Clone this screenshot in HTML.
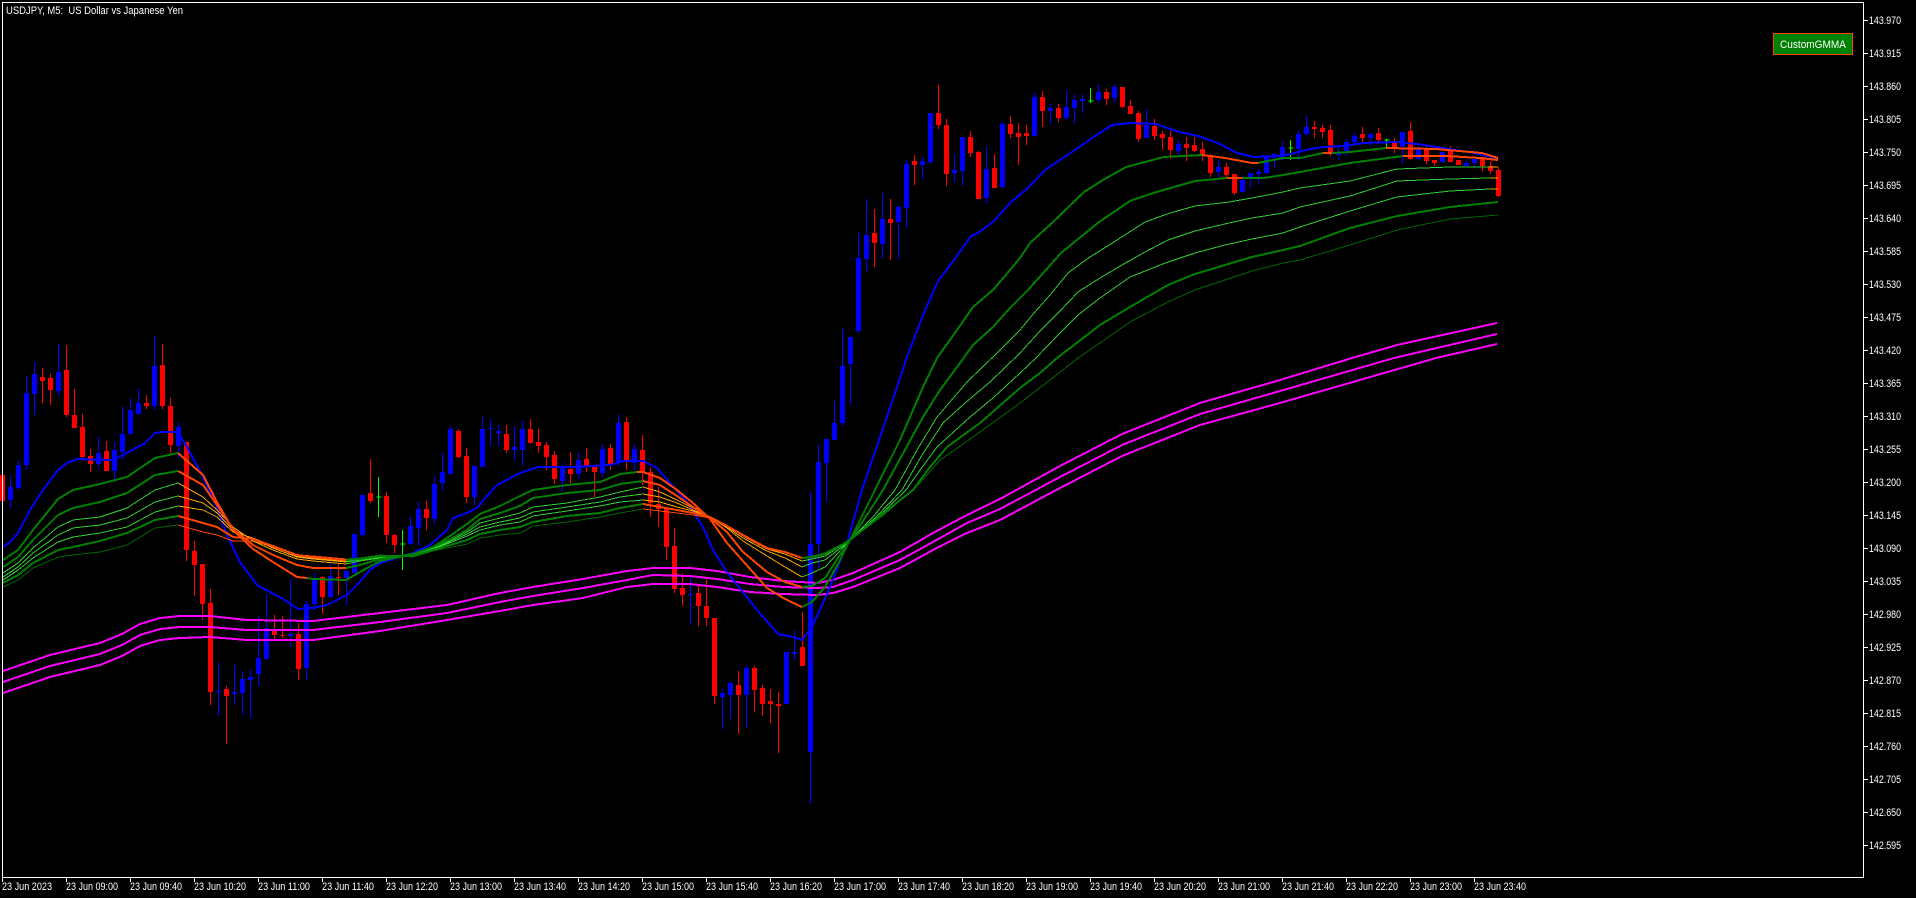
<!DOCTYPE html>
<html><head><meta charset="utf-8"><title>USDJPY, M5</title>
<style>
html,body{margin:0;padding:0;background:#000;width:1916px;height:898px;overflow:hidden}
svg{display:block}
text{font-family:"Liberation Sans",sans-serif;font-size:11px;fill:#fff;white-space:pre}
.l{fill:none;shape-rendering:crispEdges}
.t2{stroke-width:2}.t1{stroke-width:1}
.g{stroke:#008000}.lg{stroke:#32cd32}.dg{stroke:#006400}.o{stroke:#ff4500}.a{stroke:#ffa500}
</style></head><body>
<svg width="1916" height="898" viewBox="0 0 1916 898" xmlns="http://www.w3.org/2000/svg">
<rect width="1916" height="898" fill="#000"/>
<g transform="translate(.5,0)" fill="none" shape-rendering="crispEdges">
<path stroke="#00f" d="M10 475V509M18 460V490M26 376V470M34 362V415M58 344V397M98 437V469M114 442V481M122 406V460M130 398V435M138 389V415M154 336V410M178 422V458M218 662V716M234 665V705M242 671V715M250 669V718M258 616V686M266 594V659M290 579V647M306 601V680M314 573V610M330 563V597M346 571V605M354 534V573M362 495V537M410 516V545M418 502V546M434 475V524M442 453V491M450 426V475M474 466V505M482 417V467M490 419V446M498 425V446M514 426V461M522 421V466M562 463V491M578 452V479M602 444V477M618 414V466M634 444V470M690 577V625M722 689V729M730 682V719M746 665V728M786 652V704M794 630V661M810 491V804M818 444V568M826 439V502M834 401V440M842 329V426M850 337V405M858 233V333M866 199V271M882 193V258M898 205V259M906 160V228M922 157V179M930 113V164M954 154V182M962 137V186M986 146V203M1002 122V188M1034 93V137M1050 104V125M1066 90V120M1074 94V124M1082 94V113M1098 84V103M1114 84V103M1146 109V138M1178 140V157M1218 160V178M1242 175V193M1250 173V188M1258 169V185M1266 155V174M1274 154V168M1282 141V160M1298 130V160M1306 115V137M1338 147V160M1346 139V156M1354 133V146M1370 133V146M1402 132V164M1418 145V160M1442 152V163M1466 159V166M1474 156V168"/>
<path stroke="#00f" stroke-width="5" d="M10 487V500M18 465V488M26 393V465M34 374V394M58 372V391M98 453V464M114 450V471M122 434V452M130 410V434M138 403V414M154 366V406M178 427V446M218 691V692M234 692V694M242 679V693M250 677V680M258 658V674M266 628V659M290 634V636M306 604V668M314 579V604M330 576V597M346 571V578M354 534V573M362 495V535M410 526V544M418 509V528M434 484V519M442 472V483M450 429V474M474 466V497M482 429V467M490 428V429M498 431V433M514 447V450M522 429V450M562 467V481M578 460V474M602 449V473M618 423V463M634 449V463M690 594V595M722 693V697M730 683V695M746 668V695M786 652V704M794 652V654M810 544V752M818 462V544M826 439V463M834 423V440M842 366V423M850 337V364M858 258V331M866 235V259M882 219V244M898 207V222M906 164V208M922 161V165M930 113V162M954 170V173M962 137V171M986 169V198M1002 124V187M1034 97V136M1050 108V111M1066 107V118M1074 100V108M1082 99V101M1098 92V100M1114 87V98M1146 125V138M1178 144V151M1218 167V172M1242 180V192M1250 173V178M1258 172V174M1266 157V173M1274 154V157M1282 147V156M1298 134V149M1306 127V134M1338 152V155M1346 142V151M1354 136V142M1370 134V138M1402 132V147M1418 149V159M1442 152V162M1466 163V166M1474 159V163"/>
<path stroke="#f00" d="M42 368V403M50 374V405M66 345V417M74 389V428M82 414V458M90 449V472M106 441V471M146 395V409M162 344V409M170 398V455M186 442V561M194 541V596M202 564V620M210 589V705M226 686V744M274 615V639M282 616V638M298 623V680M322 576V614M338 563V595M370 459V503M386 492V543M394 534V553M426 501V530M458 429V458M466 448V503M506 425V453M530 419V444M538 429V453M546 442V470M554 451V484M570 452V483M586 448V472M594 465V497M610 444V470M626 417V470M642 435V485M650 467V517M658 487V527M666 508V560M674 528V593M682 573V606M698 585V626M706 577V626M714 618V704M738 671V734M754 666V712M762 685V716M770 689V723M778 692V753M802 612V666M874 209V267M890 199V260M914 155V185M938 85V129M946 119V186M970 131V157M978 151V199M994 154V188M1010 116V138M1018 123V165M1026 125V145M1042 91V127M1058 104V122M1106 89V105M1122 87V108M1130 100V114M1138 111V142M1154 119V140M1162 131V150M1170 131V159M1186 137V161M1194 137V152M1202 142V161M1210 154V177M1226 163V177M1234 174V195M1314 121V138M1322 125V138M1330 125V156M1362 127V142M1378 128V142M1394 138V153M1410 122V160M1426 145V164M1434 160V166M1450 146V162M1458 160V165M1482 157V171M1490 161V174M1498 167V197"/>
<path stroke="#f00" stroke-width="5" d="M2 475V501M42 377V381M50 378V390M66 370V415M74 415V428M82 427V457M90 456V464M106 451V471M146 403V406M162 365V406M170 406V445M186 442V550M194 551V565M202 564V604M210 603V692M226 689V696M274 631V635M282 635V636M298 634V669M322 577V597M338 577V578M370 493V501M386 496V535M394 535V545M426 509V518M458 431V457M466 456V497M506 434V450M530 429V443M538 442V446M546 445V457M554 455V479M570 469V474M586 459V466M594 466V472M610 448V464M626 422V462M642 450V472M650 472V503M658 504V509M666 508V547M674 546V589M682 588V595M698 593V606M706 606V618M714 618V696M738 685V695M754 668V690M762 688V704M770 701V704M778 704V706M802 647V666M874 233V243M890 219V223M914 161V165M938 113V125M946 125V174M970 137V153M978 152V199M994 168V188M1010 124V134M1018 133V137M1026 133V136M1042 97V111M1058 108V118M1106 92V99M1122 87V107M1130 106V114M1138 113V139M1154 126V136M1162 134V138M1170 137V150M1186 144V148M1194 145V151M1202 149V155M1210 155V173M1226 167V175M1234 174V193M1314 127V129M1322 128V132M1330 130V152M1362 134V138M1378 133V140M1394 142V149M1410 131V159M1426 149V161M1434 160V163M1450 151V162M1458 160V165M1482 157V166M1490 166V171M1498 170V196"/>
<path stroke="#0f0" d="M378 477V517M376 497H381M402 530V570M400 544H405M1090 88V103M1088 101H1093M1290 140V160M1288 148H1293M1386 139V148M1384 140H1389"/>
</g>
<!-- magenta -->
<g stroke="#f0f" fill="none">
<polyline class="l t2" points="3,671 50,655 100,643 122,634 140,624 160,618 180,616 210,616 247,620 313,621 380,613 447,605 500,593 533,587 583,579 627,571 653,568 690,568 717,571 750,577 783,581 817,583 833,580 853,573 900,552 933,533 967,515 1000,499 1060,466 1122,434 1200,403 1280,380 1352,358 1397,345 1497,323"/>
<polyline class="l t2" points="3,682 50,666 100,654 122,645 140,635 160,629 180,627 210,627 247,630 313,630 380,622 447,613 500,602 533,596 583,588 627,580 653,575 690,576 717,579 750,584 783,587 817,588 833,587 853,580 900,560 933,542 967,523 1000,509 1060,477 1122,445 1200,414 1280,391 1394,358 1497,334"/>
<polyline class="l t2" points="3,693 50,677 100,665 122,656 140,646 160,640 180,638 210,637 247,640 313,640 380,631 447,620 500,611 533,605 583,598 627,587 653,584 690,584 717,587 750,592 783,594 817,595 833,593 853,587 900,568 933,550 967,533 1000,520 1060,488 1122,456 1200,425 1280,403 1436,358 1497,344"/>
</g>
<!-- blue -->
<polyline class="l t2" stroke="#00f" points="3,547 10,542 18,533 30,510 43,490 58,470 67,463 77,459 113,460 123,455 145,443 155,433 162,432 178,432 187,447 203,477 217,508 227,535 240,562 257,585 283,599 298,609 313,608 327,605 347,595 357,585 370,570 380,563 413,553 430,545 447,530 453,518 467,513 477,508 485,498 497,485 520,473 538,467 573,467 610,465 623,461 643,461 657,468 670,483 687,502 703,527 713,550 727,572 757,610 778,634 793,637 802,640 812,627 828,592 847,543 862,490 880,437 897,387 907,357 923,315 938,281 954,260 971,236 978,233 994,221 1011,202 1028,188 1045,170 1072,152 1095,136 1112,125 1130,123 1156,124 1179,132 1198,136 1218,143 1237,153 1254,157 1283,156 1306,150 1323,147 1344,146 1363,143 1397,142 1417,144 1443,148 1474,153 1497,158"/>
<!-- L7 dark -->
<polyline class="l t1 dg" points="3,587 18,580 33,568 58,557 73,555 100,552 127,545 155,528 178,525"/>
<polyline class="l t1 dg" points="346,559 360,558 380,555 413,557 433,551 447,548 467,544 480,538 500,535 520,533 533,526 567,522 600,517 620,513 643,509"/>
<polyline class="l t1 dg" points="802,558 812,556 825,553 838,546 850,540 885,514 920,483 940,460 980,432 1020,403 1050,380 1078,358 1100,343 1130,322 1168,302 1195,290 1225,280 1252,271 1283,263 1300,260 1350,245 1397,230 1450,219 1498,215"/>
<polyline class="l t1 o" points="178,525 203,532 217,535 233,541 253,541 273,547 297,555 313,556 346,559"/>
<polyline class="l t1 o" points="643,509 660,511 677,513 693,515 710,518 727,526 743,535 767,548 785,552 802,558"/>
<!-- T5 -->
<polyline class="l t1 lg" points="3,580 18,570 33,558 58,542 73,537 100,533 127,527 155,512 178,506"/>
<polyline class="l t1 lg" points="346,561 360,559 380,556 413,555 433,549 447,544 467,536 480,530 500,525 520,522 533,516 567,511 600,506 620,502 643,500"/>
<polyline class="l t1 lg" points="802,561 812,559 825,556 838,548 850,540 878,517 906,490 920,470 937,447 970,417 993,398 1020,373 1036,358 1058,335 1078,315 1100,298 1130,277 1168,262 1195,253 1225,245 1252,239 1283,233 1300,227 1350,211 1397,197 1450,191 1490,189"/>
<polyline class="l t1 a" points="178,506 203,510 217,517 233,532 253,538 273,546 297,556 313,558 346,561"/>
<polyline class="l t1 a" points="643,500 660,502 677,507 693,511 710,517 727,526 743,536 767,549 785,554 802,561"/>
<polyline class="l t1 a" points="1490,189 1498,189"/>
<!-- T4 -->
<polyline class="l t1 lg" points="3,577 18,567 33,553 58,535 73,528 100,525 127,518 155,502 178,496"/>
<polyline class="l t1 lg" points="346,562 360,560 380,557 413,555 433,548 447,543 467,534 480,527 500,522 520,518 533,512 567,507 600,502 620,497 643,494"/>
<polyline class="l t1 lg" points="802,567 812,563 825,560 838,550 850,540 875,518 902,490 922,455 943,423 965,403 990,382 1020,353 1040,331 1060,311 1078,292 1100,278 1122,265 1145,252 1168,240 1195,231 1229,223 1252,218 1283,213 1300,207 1350,196 1397,181 1450,179 1490,178"/>
<polyline class="l t1 a" points="178,496 203,503 217,513 233,530 253,539 273,548 297,557 313,559 346,562"/>
<polyline class="l t1 a" points="643,494 660,497 677,503 693,510 710,517 727,527 743,538 767,551 785,558 802,567"/>
<polyline class="l t1 a" points="1490,178 1498,178"/>
<!-- T3 -->
<polyline class="l t1 lg" points="3,573 18,563 33,548 58,527 73,520 100,517 127,508 155,490 178,483"/>
<polyline class="l t1 lg" points="346,564 360,561 380,558 413,554 433,548 447,542 467,532 480,523 500,518 520,513 533,507 567,503 600,497 620,492 643,487"/>
<polyline class="l t1 lg" points="802,577 812,573 825,567 838,553 850,540 872,518 895,490 917,450 937,417 967,382 997,353 1020,330 1034,313 1050,295 1068,273 1090,257 1114,242 1145,222 1170,213 1195,206 1229,202 1252,198 1283,192 1300,188 1350,181 1397,169 1450,167 1490,167"/>
<polyline class="l t1 a" points="178,483 203,497 217,510 233,527 253,541 273,550 297,559 313,561 346,564"/>
<polyline class="l t1 a" points="643,487 660,492 677,500 693,508 710,517 727,528 743,541 767,556 785,567 802,577"/>
<polyline class="l t1 a" points="1490,167 1498,167"/>
<!-- L6 -->
<polyline class="l t2 g" points="3,583 18,575 33,563 58,550 73,547 100,541 127,533 155,520 178,516"/>
<polyline class="l t2 g" points="346,560 360,559 380,556 413,556 433,550 447,546 467,540 480,534 500,530 520,527 533,522 567,516 600,513 620,508 643,504"/>
<polyline class="l t2 g" points="802,558 812,557 825,554 838,547 850,540 880,516 913,490 930,467 947,447 980,423 1020,388 1040,373 1057,358 1078,342 1100,325 1130,307 1168,285 1195,274 1225,265 1252,257 1283,250 1300,246 1350,228 1397,216 1450,207 1498,202"/>
<polyline class="l t2 o" points="178,516 203,523 217,527 233,537 253,539 273,546 297,555 313,557 346,560"/>
<polyline class="l t2 o" points="643,504 660,507 677,510 693,513 710,517 727,526 743,535 767,548 785,552 802,558"/>
<!-- L2 -->
<polyline class="l t2 g" points="3,567 18,557 33,540 58,515 73,508 100,502 127,493 155,475 178,471"/>
<polyline class="l t2 g" points="346,568 360,565 380,559 413,554 433,547 447,541 467,530 480,519 500,513 520,506 533,498 567,493 600,490 620,484 643,481"/>
<polyline class="l t2 g" points="802,587 812,586 825,578 838,558 850,540 865,518 883,490 923,417 940,390 960,363 973,345 993,327 1010,308 1020,298 1028,290 1061,253 1099,222 1130,201 1153,193 1195,181 1227,178"/>
<polyline class="l t2 g" points="1242,178 1264,178 1283,175 1300,172 1350,163 1403,156"/>
<polyline class="l t2 o" points="178,471 203,485 217,505 233,529 253,545 273,555 297,565 313,568 346,568"/>
<polyline class="l t2 o" points="643,481 660,485 677,496 693,507 710,518 727,532 743,552 767,572 785,582 802,587"/>
<polyline class="l t2 o" points="1227,178 1242,178"/>
<polyline class="l t2 o" points="1403,156 1447,156 1480,158 1498,160"/>
<!-- L1 -->
<polyline class="l t2 g" points="3,560 18,550 33,530 58,499 73,490 100,484 127,477 155,458 178,453"/>
<polyline class="l t2 g" points="307,578 313,579 346,580 360,572 380,561 413,554 433,547 447,538 467,524 480,514 500,506 520,496 533,490 567,485 600,482 620,474 637,472"/>
<polyline class="l t2 g" points="802,607 812,602 825,587 838,564 850,540 862,516 875,490 900,440 923,387 937,358 957,330 973,307 993,290 1010,270 1020,258 1030,243 1053,222 1084,192 1103,180 1126,167 1145,162 1164,157 1202,155"/>
<polyline class="l t2 g" points="1258,163 1283,158 1300,158 1323,153"/>
<polyline class="l t2 g" points="1332,153 1350,152 1386,148"/>
<polyline class="l t2 o" points="178,453 203,475 217,502 233,530 253,549 273,562 297,577 307,578"/>
<polyline class="l t2 o" points="637,472 643,472 660,478 677,490 693,503 710,519 727,543 743,561 767,588 785,599 802,607"/>
<polyline class="l t2 o" points="1202,155 1225,158 1252,163 1258,163"/>
<polyline class="l t2 o" points="1323,153 1332,153"/>
<polyline class="l t2 o" points="1386,148 1436,149 1459,151 1482,153 1498,158"/>
<!-- frame -->
<g shape-rendering="crispEdges" fill="#fff">
<rect x="2" y="2" width="1862" height="1"/><rect x="2" y="2" width="1" height="876"/><rect x="1863" y="2" width="1" height="876"/><rect x="2" y="877" width="1862" height="1"/>
</g>
<path shape-rendering="crispEdges" stroke="#fff" fill="none" d="M1864 20.5h4M1864 53.5h4M1864 86.5h4M1864 119.5h4M1864 152.5h4M1864 185.5h4M1864 218.5h4M1864 251.5h4M1864 284.5h4M1864 317.5h4M1864 350.5h4M1864 383.5h4M1864 416.5h4M1864 449.5h4M1864 482.5h4M1864 515.5h4M1864 548.5h4M1864 581.5h4M1864 614.5h4M1864 647.5h4M1864 680.5h4M1864 713.5h4M1864 746.5h4M1864 779.5h4M1864 812.5h4M1864 845.5h4M2.5 878v4M66.5 878v4M130.5 878v4M194.5 878v4M258.5 878v4M322.5 878v4M386.5 878v4M450.5 878v4M514.5 878v4M578.5 878v4M642.5 878v4M706.5 878v4M770.5 878v4M834.5 878v4M898.5 878v4M962.5 878v4M1026.5 878v4M1090.5 878v4M1154.5 878v4M1218.5 878v4M1282.5 878v4M1346.5 878v4M1410.5 878v4M1474.5 878v4"/>
<!-- title -->
<text x="6" y="14" textLength="177" lengthAdjust="spacingAndGlyphs" xml:space="preserve">USDJPY, M5:  US Dollar vs Japanese Yen</text>
<!-- button -->
<rect x="1773.5" y="33.5" width="79" height="21" fill="#008000" stroke="#ff4500" shape-rendering="crispEdges"/>
<text x="1780" y="48" textLength="66" lengthAdjust="spacingAndGlyphs">CustomGMMA</text>
<!-- price axis -->
<g>
<text x="1869" y="24" textLength="32" lengthAdjust="spacingAndGlyphs">143.970</text>
<text x="1869" y="57" textLength="32" lengthAdjust="spacingAndGlyphs">143.915</text>
<text x="1869" y="90" textLength="32" lengthAdjust="spacingAndGlyphs">143.860</text>
<text x="1869" y="123" textLength="32" lengthAdjust="spacingAndGlyphs">143.805</text>
<text x="1869" y="156" textLength="32" lengthAdjust="spacingAndGlyphs">143.750</text>
<text x="1869" y="189" textLength="32" lengthAdjust="spacingAndGlyphs">143.695</text>
<text x="1869" y="222" textLength="32" lengthAdjust="spacingAndGlyphs">143.640</text>
<text x="1869" y="255" textLength="32" lengthAdjust="spacingAndGlyphs">143.585</text>
<text x="1869" y="288" textLength="32" lengthAdjust="spacingAndGlyphs">143.530</text>
<text x="1869" y="321" textLength="32" lengthAdjust="spacingAndGlyphs">143.475</text>
<text x="1869" y="354" textLength="32" lengthAdjust="spacingAndGlyphs">143.420</text>
<text x="1869" y="387" textLength="32" lengthAdjust="spacingAndGlyphs">143.365</text>
<text x="1869" y="420" textLength="32" lengthAdjust="spacingAndGlyphs">143.310</text>
<text x="1869" y="453" textLength="32" lengthAdjust="spacingAndGlyphs">143.255</text>
<text x="1869" y="486" textLength="32" lengthAdjust="spacingAndGlyphs">143.200</text>
<text x="1869" y="519" textLength="32" lengthAdjust="spacingAndGlyphs">143.145</text>
<text x="1869" y="552" textLength="32" lengthAdjust="spacingAndGlyphs">143.090</text>
<text x="1869" y="585" textLength="32" lengthAdjust="spacingAndGlyphs">143.035</text>
<text x="1869" y="618" textLength="32" lengthAdjust="spacingAndGlyphs">142.980</text>
<text x="1869" y="651" textLength="32" lengthAdjust="spacingAndGlyphs">142.925</text>
<text x="1869" y="684" textLength="32" lengthAdjust="spacingAndGlyphs">142.870</text>
<text x="1869" y="717" textLength="32" lengthAdjust="spacingAndGlyphs">142.815</text>
<text x="1869" y="750" textLength="32" lengthAdjust="spacingAndGlyphs">142.760</text>
<text x="1869" y="783" textLength="32" lengthAdjust="spacingAndGlyphs">142.705</text>
<text x="1869" y="816" textLength="32" lengthAdjust="spacingAndGlyphs">142.650</text>
<text x="1869" y="849" textLength="32" lengthAdjust="spacingAndGlyphs">142.595</text>
</g>
<!-- time axis -->
<g>
<text x="2" y="890" textLength="50" lengthAdjust="spacingAndGlyphs">23 Jun 2023</text>
<text x="66" y="890" textLength="52" lengthAdjust="spacingAndGlyphs">23 Jun 09:00</text>
<text x="130" y="890" textLength="52" lengthAdjust="spacingAndGlyphs">23 Jun 09:40</text>
<text x="194" y="890" textLength="52" lengthAdjust="spacingAndGlyphs">23 Jun 10:20</text>
<text x="258" y="890" textLength="52" lengthAdjust="spacingAndGlyphs">23 Jun 11:00</text>
<text x="322" y="890" textLength="52" lengthAdjust="spacingAndGlyphs">23 Jun 11:40</text>
<text x="386" y="890" textLength="52" lengthAdjust="spacingAndGlyphs">23 Jun 12:20</text>
<text x="450" y="890" textLength="52" lengthAdjust="spacingAndGlyphs">23 Jun 13:00</text>
<text x="514" y="890" textLength="52" lengthAdjust="spacingAndGlyphs">23 Jun 13:40</text>
<text x="578" y="890" textLength="52" lengthAdjust="spacingAndGlyphs">23 Jun 14:20</text>
<text x="642" y="890" textLength="52" lengthAdjust="spacingAndGlyphs">23 Jun 15:00</text>
<text x="706" y="890" textLength="52" lengthAdjust="spacingAndGlyphs">23 Jun 15:40</text>
<text x="770" y="890" textLength="52" lengthAdjust="spacingAndGlyphs">23 Jun 16:20</text>
<text x="834" y="890" textLength="52" lengthAdjust="spacingAndGlyphs">23 Jun 17:00</text>
<text x="898" y="890" textLength="52" lengthAdjust="spacingAndGlyphs">23 Jun 17:40</text>
<text x="962" y="890" textLength="52" lengthAdjust="spacingAndGlyphs">23 Jun 18:20</text>
<text x="1026" y="890" textLength="52" lengthAdjust="spacingAndGlyphs">23 Jun 19:00</text>
<text x="1090" y="890" textLength="52" lengthAdjust="spacingAndGlyphs">23 Jun 19:40</text>
<text x="1154" y="890" textLength="52" lengthAdjust="spacingAndGlyphs">23 Jun 20:20</text>
<text x="1218" y="890" textLength="52" lengthAdjust="spacingAndGlyphs">23 Jun 21:00</text>
<text x="1282" y="890" textLength="52" lengthAdjust="spacingAndGlyphs">23 Jun 21:40</text>
<text x="1346" y="890" textLength="52" lengthAdjust="spacingAndGlyphs">23 Jun 22:20</text>
<text x="1410" y="890" textLength="52" lengthAdjust="spacingAndGlyphs">23 Jun 23:00</text>
<text x="1474" y="890" textLength="52" lengthAdjust="spacingAndGlyphs">23 Jun 23:40</text>
</g>
</svg>
</body></html>
